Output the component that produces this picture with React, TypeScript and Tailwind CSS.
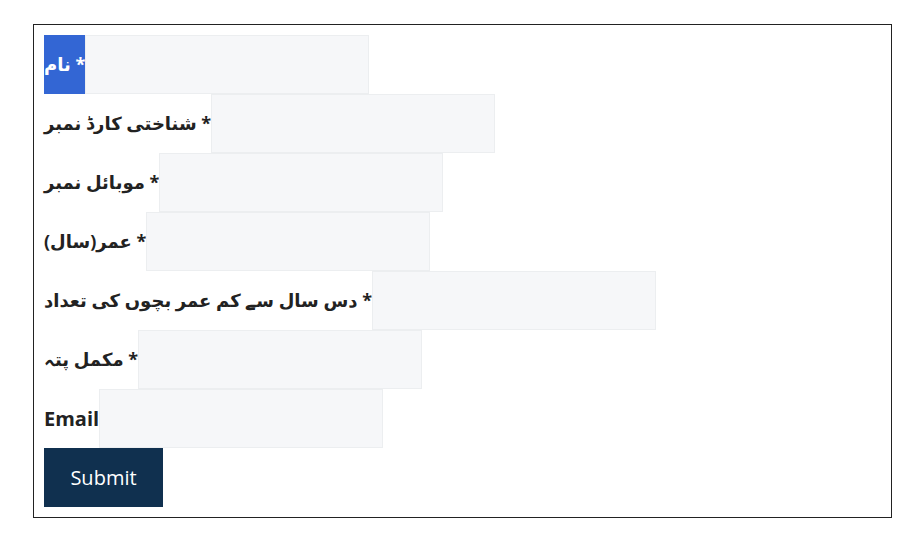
import React from "react";

const rows: { label: string; active?: boolean; latin?: boolean }[] = [
  { label: "نام *", active: true },
  { label: "شناختی کارڈ نمبر *" },
  { label: "موبائل نمبر *" },
  { label: "عمر(سال) *" },
  { label: "دس سال سے کم عمر بچوں کی تعداد *" },
  { label: "مکمل پتہ *" },
  { label: "Email", latin: true },
];

export default function App() {
  return (
    <div className="min-h-[548px] bg-white pt-[24px] pl-[33px]" style={{ fontFamily: '"Open Sans", "DejaVu Sans", sans-serif' }}>
      <form className="flex w-[859px] flex-col border border-[#222] p-[10px]" onSubmit={(e) => e.preventDefault()}>
        {rows.map((r, i) => (
          <div key={i} className="flex h-[59px] items-stretch">
            <label
              dir="ltr"
              className={
                "flex items-center font-bold " +
                (r.latin ? "text-[20px] " : "text-[18px] ") +
                (r.active ? "bg-[#3366d4] text-white" : "text-[#222]")
              }
            >
              {r.label}
            </label>
            <input
              type="text"
              className="h-[59px] w-[284px] border border-[#eceef0] bg-[#f6f7f9] outline-none"
            />
          </div>
        ))}
        <div className="flex">
          <button
            type="submit"
            className="h-[59px] w-[119px] bg-[#10304f] text-[20px] text-white"
          >
            Submit
          </button>
        </div>
      </form>
    </div>
  );
}
